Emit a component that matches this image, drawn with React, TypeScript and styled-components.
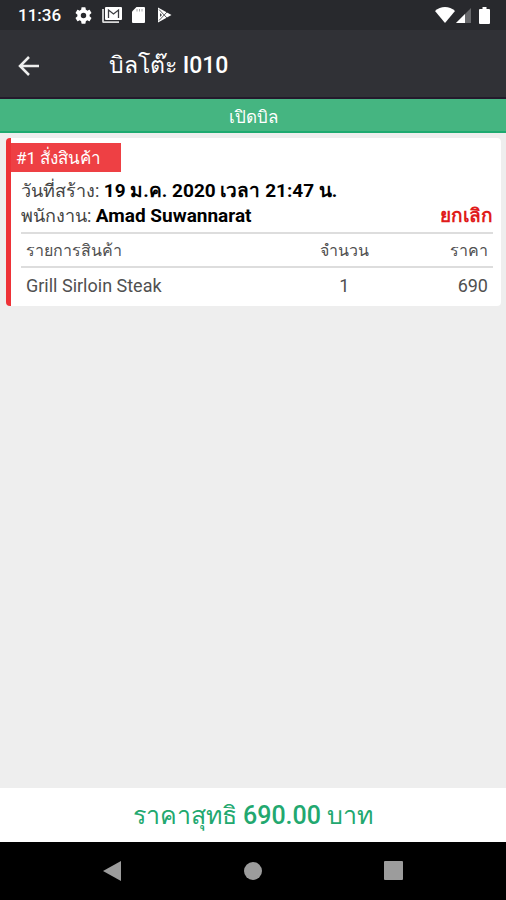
import React from "react";
import styled, { createGlobalStyle } from "styled-components";

const GlobalStyle = createGlobalStyle`
  *, *::before, *::after { box-sizing: border-box; }
  body {
    margin: 0;
    background: #eeeeee;
    font-family: Roboto, sans-serif;
  }
  button {
    font: inherit;
    color: inherit;
    border: 0;
    padding: 0;
    background: none;
    cursor: pointer;
  }
`;

const Screen = styled.div`
  display: flex;
  flex-direction: column;
  min-height: 100vh;
`;

const StatusBar = styled.div`
  display: flex;
  align-items: center;
  justify-content: space-between;
  height: 30px;
  padding: 0 16px 0 18px;
  background: #28292d;
  color: #ffffff;
`;

const StatusGroup = styled.div<{ $gap: number }>`
  display: flex;
  align-items: center;
  gap: ${(p) => p.$gap}px;
`;

const Clock = styled.span`
  margin-right: 4px;
  font-size: 17px;
  line-height: 24px;
  font-weight: 500;
`;

const AppBar = styled.header`
  display: flex;
  align-items: center;
  gap: 68px;
  height: 69px;
  padding: 4px 16px 0;
  background: #303136;
  border-bottom: 2px solid #241a2c;
  color: #ffffff;
`;

const BackButton = styled.button`
  display: flex;
`;

const Title = styled.h1`
  margin: 0;
  font-size: 23px;
  line-height: 32px;
  font-weight: 500;
`;

const OpenBill = styled.button`
  height: 34px;
  && {
    padding-top: 3px;
    background: #45b581;
    border-bottom: 2px solid #1eaa70;
    color: #ffffff;
    font-size: 17px;
    line-height: 24px;
  }
`;

const Content = styled.main`
  flex: 1;
  padding: 5px 5px 5px 6px;
`;

const Card = styled.section`
  padding: 5px 8px 5px 0;
  background: #ffffff;
  border-left: 5px solid #ee3237;
  border-radius: 4px;
`;

const Badge = styled.h2`
  width: fit-content;
  min-width: 110px;
  margin: 0;
  padding: 3px 20px 2px 5px;
  background: #ee4044;
  color: #ffffff;
  font-size: 17px;
  line-height: 24px;
  font-weight: 400;
`;

const Details = styled.div`
  padding: 6px 0 4px 10px;
  color: #444444;
  font-size: 18px;
  line-height: 25px;
`;

const DetailRow = styled.div`
  display: flex;
  justify-content: space-between;
  height: 25px;
`;

const Value = styled.b`
  font-size: 19px;
  font-weight: 700;
  color: #000000;
`;

const CancelButton = styled.button`
  && {
    color: #e01b1b;
    font-size: 19px;
    font-weight: 700;
  }
`;

const Items = styled.table`
  width: calc(100% - 10px);
  margin-left: 10px;
  border-collapse: collapse;
  table-layout: fixed;
  color: #505050;
  line-height: 24px;
`;

const Cell = styled.td<{ $align?: "left" | "center" | "right"; $width?: string }>`
  width: ${(p) => p.$width ?? "auto"};
  height: 34px;
  padding: 2px 5px 0;
  border-top: 2px solid #dddddd;
  font-size: 18px;
  font-weight: 400;
  text-align: ${(p) => p.$align ?? "left"};
`;

const HeadCell = styled(Cell).attrs({ as: "th" })`
  font-size: 16px;
`;

const Total = styled.footer`
  padding: 12px 0 10px;
  background: #ffffff;
  color: #22a86f;
  font-size: 25px;
  line-height: 32px;
  font-weight: 500;
  text-align: center;
`;

const NavBar = styled.nav`
  display: flex;
  align-items: center;
  justify-content: center;
  gap: 116px;
  height: 58px;
  background: #000000;
`;

const NavButton = styled.button`
  && {
    display: flex;
    color: #9c9c9c;
  }
`;

const GearIcon = () => (
  <svg width="17" height="17" viewBox="2 2 20 20" fill="currentColor" aria-hidden="true">
    <path d="M19.14 12.94c.04-.3.06-.61.06-.94 0-.32-.02-.64-.07-.94l2.03-1.58a.49.49 0 0 0 .12-.61l-1.92-3.32a.49.49 0 0 0-.59-.22l-2.39.96c-.5-.38-1.03-.7-1.62-.94l-.36-2.54a.48.48 0 0 0-.48-.41h-3.84c-.24 0-.43.17-.47.41l-.36 2.54c-.59.24-1.13.57-1.62.94l-2.39-.96c-.22-.08-.47 0-.59.22L2.74 8.87c-.12.21-.08.47.12.61l2.03 1.58c-.05.3-.09.63-.09.94s.02.64.07.94l-2.03 1.58a.49.49 0 0 0-.12.61l1.92 3.32c.12.22.37.29.59.22l2.39-.96c.5.38 1.03.7 1.62.94l.36 2.54c.05.24.24.41.48.41h3.84c.24 0 .44-.17.47-.41l.36-2.54c.59-.24 1.13-.56 1.62-.94l2.39.96c.22.08.47 0 .59-.22l1.92-3.32c.12-.22.07-.47-.12-.61zM12 15.2a3.2 3.2 0 1 1 0-6.4 3.2 3.2 0 0 1 0 6.4z" />
  </svg>
);

const MailIcon = () => (
  <svg width="20" height="16" viewBox="0 0 20 16" aria-hidden="true">
    <path d="M1 2v12.500a.7.7 0 0 0 .7.7H17" fill="none" stroke="#d8d8d8" strokeWidth="1.800" />
    <rect x="3" width="17" height="13" rx="1" fill="#ffffff" />
    <path d="M6.500 11V3l5 4 5-4v8" fill="none" stroke="#3c3d41" strokeWidth="1.300" />
  </svg>
);

const CardIcon = () => (
  <svg width="13" height="16" viewBox="0 0 13 16" aria-hidden="true">
    <path d="M4.500 0H12a1 1 0 0 1 1 1v14a1 1 0 0 1-1 1H1a1 1 0 0 1-1-1V4.500z" fill="#ffffff" />
    <path d="M5 2v2.500M7.500 2v2.500M10 2v2.500" stroke="#a5a6a8" strokeWidth="1" />
  </svg>
);

const PlayIcon = () => (
  <svg width="17" height="16" viewBox="-2 0 17 16" aria-hidden="true">
    <path d="M1 .5 14.500 8 1 15.500z" fill="#ffffff" />
    <path d="M2 2.500 10 11M2 13.500 10 5" stroke="#45464a" strokeWidth="0.900" />
    <path d="M3 6v4L5 8z" fill="#45464a" />
  </svg>
);

const WifiIcon = () => (
  <svg width="20" height="16" viewBox="0 0 20 16" aria-hidden="true">
    <path d="M10 16 0 4C5.500-1.200 14.500-1.200 20 4z" fill="#ffffff" />
  </svg>
);

const SignalIcon = () => (
  <svg width="15" height="15" viewBox="0 0 15 15" aria-hidden="true">
    <path d="M15 0v15H0z" fill="#67686b" />
    <path d="M9 6v9H0z" fill="#ffffff" />
  </svg>
);

const BatteryIcon = () => (
  <svg width="11" height="17" viewBox="0 0 11 17" aria-hidden="true">
    <path d="M3.500 0h4v2H10a1 1 0 0 1 1 1v13a1 1 0 0 1-1 1H1a1 1 0 0 1-1-1V3a1 1 0 0 1 1-1h2.500z" fill="#ffffff" />
  </svg>
);

const BackArrow = () => (
  <svg width="25" height="24" viewBox="0 0 25 24" fill="none" stroke="#eeeeee" strokeWidth="2.500" aria-hidden="true">
    <path d="M23 12H4M13 3l-9 9 9 9" />
  </svg>
);

const items = [{ name: "Grill Sirloin Steak", quantity: 1, price: 690 }];

export default function App() {
  return (
    <>
      <GlobalStyle />
      <Screen>
        <StatusBar>
          <StatusGroup $gap={10}>
            <Clock>11:36</Clock>
            <GearIcon />
            <MailIcon />
            <CardIcon />
            <PlayIcon />
          </StatusGroup>
          <StatusGroup $gap={8}>
            <StatusGroup $gap={1}>
              <WifiIcon />
              <SignalIcon />
            </StatusGroup>
            <BatteryIcon />
          </StatusGroup>
        </StatusBar>
        <AppBar>
          <BackButton type="button" aria-label="กลับ">
            <BackArrow />
          </BackButton>
          <Title>บิลโต๊ะ I010</Title>
        </AppBar>
        <OpenBill type="button">เปิดบิล</OpenBill>
        <Content>
          <Card>
            <Badge>#1 สั่งสินค้า</Badge>
            <Details>
              <DetailRow>
                <span>
                  วันที่สร้าง: <Value>19 ม.ค. 2020 เวลา 21:47 น.</Value>
                </span>
              </DetailRow>
              <DetailRow>
                <span>
                  พนักงาน: <Value>Amad Suwannarat</Value>
                </span>
                <CancelButton type="button">ยกเลิก</CancelButton>
              </DetailRow>
            </Details>
            <Items>
              <thead>
                <tr>
                  <HeadCell scope="col" $width="56%">รายการสินค้า</HeadCell>
                  <HeadCell scope="col" $width="25%" $align="center">จำนวน</HeadCell>
                  <HeadCell scope="col" $align="right">ราคา</HeadCell>
                </tr>
              </thead>
              <tbody>
                {items.map((item) => (
                  <tr key={item.name}>
                    <Cell>{item.name}</Cell>
                    <Cell $align="center">{item.quantity}</Cell>
                    <Cell $align="right">{item.price}</Cell>
                  </tr>
                ))}
              </tbody>
            </Items>
          </Card>
        </Content>
        <Total>ราคาสุทธิ 690.00 บาท</Total>
        <NavBar>
          <NavButton type="button" aria-label="ย้อนกลับ">
            <svg width="24" height="22" viewBox="0 0 24 22" fill="currentColor" aria-hidden="true">
              <path d="M20 1v20L2 11z" />
            </svg>
          </NavButton>
          <NavButton type="button" aria-label="หน้าหลัก">
            <svg width="24" height="22" viewBox="0 0 24 22" fill="currentColor" aria-hidden="true">
              <circle cx="12" cy="11" r="9" />
            </svg>
          </NavButton>
          <NavButton type="button" aria-label="แอปล่าสุด">
            <svg width="24" height="22" viewBox="0 0 24 22" fill="currentColor" aria-hidden="true">
              <rect x="3" y="1" width="19" height="19" rx="1" />
            </svg>
          </NavButton>
        </NavBar>
      </Screen>
    </>
  );
}
